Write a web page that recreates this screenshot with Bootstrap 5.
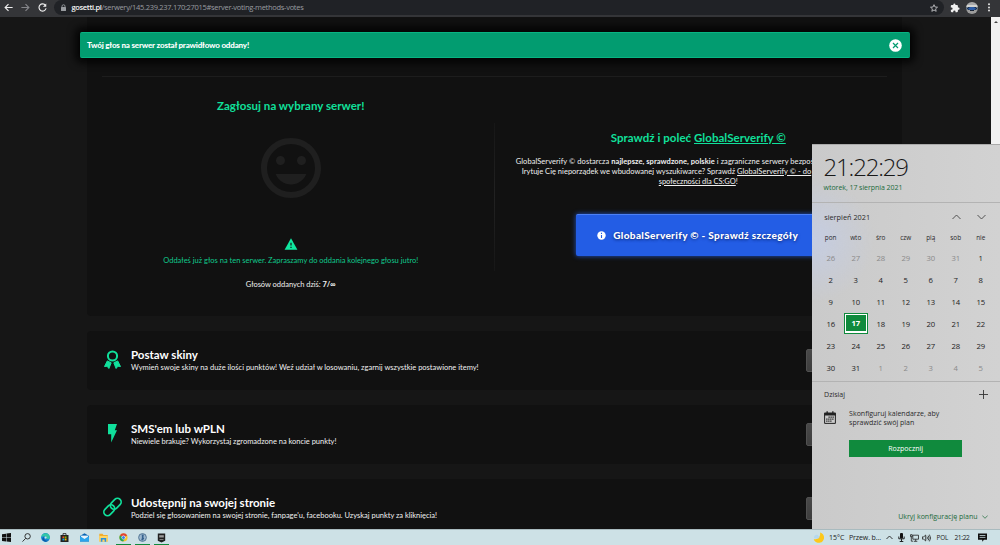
<!DOCTYPE html>
<html lang="pl">
<head>
<meta charset="utf-8">
<meta name="viewport" content="width=device-width, initial-scale=1">
<title>gosetti.pl</title>
<link href="https://cdn.jsdelivr.net/npm/bootstrap@5.3.0/dist/css/bootstrap.min.css" rel="stylesheet">
<style>
:root{--mint:#10e09b;--os:"Open Sans","Noto Sans",sans-serif}
body{width:1000px;height:545px;overflow:hidden;background:#161616;font-family:Lato,"Noto Sans",sans-serif;font-size:7.5px;line-height:10px;color:#f0f0f0}
svg{display:block;flex:none}
.toolbar{height:17px;background:#343538;font-family:var(--os);flex:none}
.nav-icons{width:54px;padding-left:4px;padding-bottom:2px}
.urlbar{width:890px;height:15px;background:#202226;border-radius:8px;margin-bottom:2px;padding-left:6px;padding-right:6px;font-size:7.5px;color:#999ca0}
.urlbar b{font-weight:600;color:#f4f4f4;letter-spacing:-.35px}
.urlbar .path{letter-spacing:-.3px}
.avatar{width:12px;height:12px;border-radius:50%;background:radial-gradient(ellipse 5px 2px at 50% 55%,#2c5da8 0 60%,#18202c 100%,transparent),linear-gradient(#aaa 0 28%,#d3d3d0 28% 45%,#6d7a88 45% 65%,#9c9c9c 65%)}
.site{height:512px;overflow:hidden;flex:none}
.content-col{margin-left:87px;width:815px}
.panel{background:#111}
.notice{left:79.5px;top:15px;width:830px;height:26px;background:#029c70;border:1px solid #08b482;border-width:1px 0;border-radius:2px;box-shadow:0 0 8px 4px #020202;padding:0 7.5px;font-weight:900;font-size:8px;letter-spacing:-.175px;color:#fff}
.vote{height:299px;padding:59px 15px 0;border-radius:0 0 4px 4px}
.rule{height:1px;background:#1d1d1d}
.half{width:407.5px;flex:none}
.ttl{font-size:11.5px;font-weight:700;line-height:16px;letter-spacing:.038px;color:var(--mint)}
.split{width:1px;height:148px;margin-top:46px;margin-left:-1px;background:linear-gradient(#171717,#222,#171717)}
.blurb{width:365px;margin-top:11px;letter-spacing:.06px}
.cta{width:245px;height:42.5px;background:#235de5;border-top:1px solid #4c80f5;border-radius:2px;box-shadow:0 0 5px #2356cc;color:#fff;font-size:10px;font-weight:900;letter-spacing:.345px;text-shadow:0 1px 3px #0a2470;margin-top:27px;padding-right:1px}
.option{height:59px;border-radius:4px;margin-top:15px;padding:0 15px 0 16px}
.option h2{font-size:11.5px;font-weight:700;line-height:14px;margin:0 0 .5px;color:#fff}
.option .ico{width:19px;color:var(--mint)}
.option .go{width:81px;height:23px;background:linear-gradient(#494949,#3e3e3e);border:1px solid #505050;border-radius:2px}
.scrollbar{width:9px;background:#f1f1f1;flex:none;padding-top:4px}
.flyout{right:0;top:144px;width:188.4px;height:385px;z-index:5;background:radial-gradient(circle at 0 95px,#c5cde2 0,rgba(205,206,208,0) 62px),linear-gradient(90deg,#cacaca,#d2d2d2);border:1px solid #aaa;border-width:1px 0 0 0;color:#2a2a2a;font-family:var(--os);font-size:7px}
.clock{height:58px;border-bottom:1px solid #b3b3b3;padding:8px 0 0 12px}
.time{font-size:24px;font-weight:300;line-height:27px;letter-spacing:-1.2px;color:#181818}
.date{color:#1b6a3a;letter-spacing:-.05px;margin-top:2.5px}
.month{height:143.5px;padding-left:6.6px;padding-top:8px}
.mhead{padding:0 5px 0 6px;height:12px}
.days{display:grid;grid-template-columns:repeat(7,25px);text-align:center}
.days.names{font-size:6.4px;line-height:10px;margin-top:9.5px;margin-bottom:4px}
.days.nums{grid-auto-rows:22px;line-height:22.5px;font-size:7.7px;letter-spacing:-.15px;color:#222}
.days .off{color:#8a8a8a}
.today{width:24px;height:21px;margin:0 auto;border:1px solid #108a3d;background:#fff;padding:1.2px}
.today span{display:block;background:#108a3d;color:#fff;font-weight:700;height:100%;line-height:16.5px}
.agenda{border-top:1px solid #b3b3b3;padding:8px 6.5px 0 12.5px;height:148px;margin-top:34px}
.start{width:113px;height:17px;background:#108a3d;color:#fff;margin:12px 0 0 25px;line-height:17px}
.plan{color:#1b6a3a;margin-top:55px}
.taskbar{height:16px;background:#cde1e6;border-top:1px solid #a9bbbf;font-family:var(--os);font-size:7px;color:#222;flex:none}
.app{width:19.4px;height:15px;display:flex;align-items:center;justify-content:center}
.app.open{background:linear-gradient(#108a3d,#108a3d) center bottom/15px 1.5px no-repeat}
.tray{width:188px}
</style>
</head>
<body class="d-flex flex-column position-relative">

<header class="toolbar d-flex align-items-center">
  <div class="nav-icons d-flex align-items-center">
    <svg width="9" height="9" viewBox="0 0 24 24" fill="none" stroke="#eee" stroke-width="3"><path d="M23 12H4M12 3l-9 9 9 9"/></svg>
    <svg class="ms-2" width="9" height="9" viewBox="0 0 24 24" fill="none" stroke="#85868a" stroke-width="3"><path d="M1 12h19M12 3l9 9-9 9"/></svg>
    <svg class="ms-2" width="9" height="9" viewBox="0 0 24 24" fill="none" stroke="#eee" stroke-width="3"><path d="M20 6.5A9.5 9.5 0 1 0 21.500 14"/><path d="M22 1v9h-9z" fill="#eee" stroke="none"/></svg>
  </div>
  <div class="urlbar d-flex align-items-center">
    <svg width="7" height="8" viewBox="0 0 14 16"><path d="M4 7V4.500a3 3 0 0 1 6 0V7" fill="none" stroke="#999ca0" stroke-width="1.800"/><rect x="2" y="6" width="10" height="8" rx="1" fill="#999ca0"/></svg>
    <span style="margin-left:4.500px;margin-top:-1px"><b>gosetti.pl</b><span class="path">/serwery/145.239.237.170:27015#server-voting-methods-votes</span></span>
    <svg class="ms-auto" width="8" height="8" viewBox="0 0 24 24" fill="none" stroke="#cfd0d3" stroke-width="2.400"><path d="M12 2l3 7 7.500.600-5.700 5 1.700 7.400-6.500-4-6.500 4 1.700-7.400-5.700-5L9 9z"/></svg>
  </div>
  <svg style="margin-left:6px;margin-bottom:2px" width="10" height="10" viewBox="0 0 24 24" fill="#f1f1f1"><path d="M20.500 11H19V7a2 2 0 0 0-2-2h-4V3.500a2.500 2.500 0 0 0-5 0V5H4a2 2 0 0 0-2 2v3.800h1.500a2.700 2.700 0 0 1 0 5.400H2V20a2 2 0 0 0 2 2h3.800v-1.500a2.700 2.700 0 0 1 5.400 0V22H17a2 2 0 0 0 2-2v-4h1.500a2.500 2.500 0 0 0 0-5z"/></svg>
  <div class="avatar" style="margin-left:6px;margin-bottom:2px"></div>
  <svg style="margin-left:9px;margin-bottom:2px" width="4" height="9" viewBox="0 0 4 9" fill="#e4e4e4"><circle cx="2" cy="1.200" r="1"/><circle cx="2" cy="4.400" r="1"/><circle cx="2" cy="7.600" r="1"/></svg>
</header>

<div class="site d-flex">
  <main class="flex-grow-1 position-relative">
    <div class="notice position-absolute d-flex align-items-center justify-content-between" role="alert">
      <span>Twój głos na serwer został prawidłowo oddany!</span>
      <svg width="13" height="13" viewBox="0 0 13 13"><circle cx="6.500" cy="6.500" r="6.300" fill="#fff"/><path d="M4 4l5 5M9 4l-5 5" stroke="#029c70" stroke-width="1.200"/></svg>
    </div>
    <div class="content-col">
      <section class="panel vote">
        <div class="rule"></div>
        <div class="d-flex" style="margin:0 -15px">
          <div class="half d-flex flex-column align-items-center">
            <div class="ttl" style="margin-top:20.500px">Zagłosuj na wybrany serwer!</div>
            <svg style="margin-top:18px" width="72" height="72" viewBox="0 0 24 24" fill="#1f1f1f"><path d="M11.990 2C6.470 2 2 6.480 2 12s4.470 10 9.990 10C17.520 22 22 17.520 22 12S17.520 2 11.990 2zM12 20a8 8 0 1 1 0-16 8 8 0 0 1 0 16zM15.500 11a1.500 1.500 0 1 0 0-3 1.500 1.500 0 0 0 0 3zM8.500 11a1.500 1.500 0 1 0 0-3 1.500 1.500 0 0 0 0 3zM12 17.500c2.330 0 4.310-1.460 5.110-3.500H6.890c.8 2.040 2.780 3.500 5.110 3.500z"/></svg>
            <svg style="margin-top:33.500px" width="14" height="14" viewBox="0 0 24 24"><path d="M1 22h22L12 2z" fill="#10e8a0"/><path d="M11 10h2v4.500h-2zM11 16.500h2v2.200h-2z" fill="#111"/></svg>
            <div style="margin-top:4.500px;color:#10c98c">Oddałeś już głos na ten serwer. Zapraszamy do oddania kolejnego głosu jutro!</div>
            <div style="margin-top:14.500px;letter-spacing:-.03px">Głosów oddanych dziś: <b>7/∞</b></div>
          </div>
          <div class="split"></div>
          <div class="half d-flex flex-column align-items-center text-nowrap">
            <div class="ttl" style="margin-top:52.500px">Sprawdź i poleć <u>GlobalServerify ©</u></div>
            <div class="blurb">
              <div>GlobalServerify © dostarcza <b>najlepsze, sprawdzone, polskie</b> i zagraniczne serwery bezpoś</div>
              <div style="padding-left:6px;letter-spacing:.02px">Irytuje Cię nieporządek we wbudowanej wyszukiwarce? Sprawdź <u>GlobalServerify © - do</u></div>
              <div class="text-center" style="letter-spacing:-.044px"><u>społeczności dla CS:GO</u>!</div>
            </div>
            <div class="cta d-flex align-items-center justify-content-center">
              <svg width="9" height="9" viewBox="0 0 9 9"><circle cx="4.500" cy="4.500" r="4.200" fill="#fff"/><path d="M4.500 1.800v1.200M4.500 3.900v3" stroke="#235de5" stroke-width="1.100"/></svg>
              <span style="margin-left:7px">GlobalServerify © - Sprawdź szczegóły</span>
            </div>
          </div>
        </div>
      </section>

      <section class="panel option d-flex align-items-center">
        <svg class="ico" height="20" viewBox="0 0 19 20" fill="none" stroke="currentColor" style="margin-top:-2px"><circle cx="9.500" cy="6" r="4.600" stroke-width="2"/><path d="M4.300 10.900l3.900 1.900L5.900 18.500 4.100 16.200 1.500 16.500zM14.700 10.900l-3.900 1.900 2.300 5.700 1.800-2.300 2.600.300z" fill="currentColor"/></svg>
        <div style="margin-left:9px"><h2>Postaw skiny</h2>Wymień swoje skiny na duże ilości punktów! Weź udział w losowaniu, zgarnij wszystkie postawione itemy!</div>
        <div class="go ms-auto"></div>
      </section>
      <section class="panel option d-flex align-items-center">
        <svg class="ico" height="20" viewBox="0 0 19 20" fill="currentColor" style="margin-top:-3px"><path d="M5 1h9l-2.200 6.300H14L8.200 19.500V11.200H5z"/></svg>
        <div style="margin-left:9px"><h2>SMS'em lub wPLN</h2><span style="letter-spacing:-.02px">Niewiele brakuje? Wykorzystaj zgromadzone na koncie punkty!</span></div>
        <div class="go ms-auto"></div>
      </section>
      <section class="panel option d-flex align-items-center">
        <svg class="ico" height="20" viewBox="0 0 19 20" fill="none" stroke="currentColor" stroke-width="1.700" style="margin-top:-4px"><g transform="rotate(-45 9.500 10)"><rect x="-1.200" y="6.300" width="12.200" height="7.400" rx="3.700"/><rect x="8" y="6.300" width="12.200" height="7.400" rx="3.700"/></g></svg>
        <div style="margin-left:9px"><h2 style="letter-spacing:-.03px">Udostępnij na swojej stronie</h2><span style="letter-spacing:-.018px">Podziel się głosowaniem na swojej stronie, fanpage'u, facebooku. Uzyskaj punkty za kliknięcia!</span></div>
        <div class="go ms-auto"></div>
      </section>
    </div>
  </main>
  <div class="scrollbar"><svg class="mx-auto" width="4" height="3" viewBox="0 0 4 3"><path d="M0 2l2-2 2 2z" fill="#444"/></svg></div>
</div>

<aside class="flyout position-absolute">
  <div class="clock">
    <div class="time">21:22:29</div>
    <div class="date">wtorek, 17 sierpnia 2021</div>
  </div>
  <div class="month">
    <div class="mhead d-flex align-items-center">
      <span style="font-size:7.300px">sierpień 2021</span>
      <svg class="ms-auto" width="9" height="6" viewBox="0 0 9 6" fill="none" stroke="#444" stroke-width=".9"><path d="M.5 5l4-4 4 4"/></svg>
      <svg style="margin:0 9px 0 16px" width="9" height="6" viewBox="0 0 9 6" fill="none" stroke="#444" stroke-width=".9"><path d="M.5 1l4 4 4-4"/></svg>
    </div>
    <div class="days names"><span>pon</span><span>wto</span><span>śro</span><span>czw</span><span>pią</span><span>sob</span><span>nie</span></div>
    <div class="days nums">
      <span class="off">26</span><span class="off">27</span><span class="off">28</span><span class="off">29</span><span class="off">30</span><span class="off">31</span><span>1</span>
      <span>2</span><span>3</span><span>4</span><span>5</span><span>6</span><span>7</span><span>8</span>
      <span>9</span><span>10</span><span>11</span><span>12</span><span>13</span><span>14</span><span>15</span>
      <span>16</span><div class="today"><span>17</span></div><span>18</span><span>19</span><span>20</span><span>21</span><span>22</span>
      <span>23</span><span>24</span><span>25</span><span>26</span><span>27</span><span>28</span><span>29</span>
      <span>30</span><span>31</span><span class="off">1</span><span class="off">2</span><span class="off">3</span><span class="off">4</span><span class="off">5</span>
    </div>
  </div>
  <div class="agenda">
    <div class="d-flex align-items-center justify-content-between" style="padding-right:6px"><span>Dzisiaj</span>
      <svg width="9" height="9" viewBox="0 0 9 9" stroke="#333" stroke-width=".9"><path d="M4.500 0v9M0 4.500h9"/></svg></div>
    <div class="d-flex" style="margin-top:9px;line-height:9.500px">
      <svg style="margin-top:2px" width="12" height="13" viewBox="0 0 12 13"><path d="M.6 2.200h10.800v10.200H.6z" fill="none" stroke="#222"/><path d="M.3 1.800h11.400v2.700H.3zM2.500.300h1.300v2H2.500zM8.200.300h1.300v2H8.200z" fill="#222"/><path d="M4.500 6.200h5.500M2.200 8.200H10M2.200 10.200h5.500" stroke="#222" stroke-width="1.200" stroke-dasharray="1.300 .7"/></svg>
      <span style="margin-left:13px">Skonfiguruj kalendarze, aby<br>sprawdzić swój plan</span>
    </div>
    <div class="start text-center">Rozpocznij</div>
    <div class="plan d-flex align-items-center justify-content-end" style="padding-right:6px">Ukryj konfigurację planu
      <svg style="margin-left:4px" width="6" height="4" viewBox="0 0 6 4" fill="none" stroke="#1b6a3a" stroke-width=".7"><path d="M.3.500L3 3.300 5.700.500"/></svg></div>
  </div>
</aside>

<footer class="taskbar d-flex justify-content-between">
  <div class="d-flex" style="margin-left:-3px">
    <div class="app"><svg width="9" height="9" viewBox="0 0 9 9" fill="#111"><path d="M0 1.200L4 .700v3.600H0zM4.500.600L9 0v4.300H4.500zM0 4.800h4v3.600L0 7.900zM4.500 4.800H9V9L4.500 8.400z"/></svg></div>
    <div class="app"><svg width="9" height="9" viewBox="0 0 9 9" fill="none" stroke="#222" stroke-width=".9"><circle cx="5.600" cy="3.300" r="2.700"/><path d="M3.700 5.300L.5 8.600"/></svg></div>
    <div class="app"><svg width="9" height="9" viewBox="0 0 9 9"><circle cx="4.500" cy="4.500" r="4.400" fill="#1588d8"/><path d="M.2 4C1-.8 8.400-1 8.900 4.200 8.800 6.600 6 6.300 5.400 5.600c.8-2-2.600-3.500-5.200-1.600z" fill="#35c7a5"/><path d="M3 4c-1 2 1 4.300 4.800 3.600-2 2-6 1.200-6.500-1.600C1.200 5 2 4.200 3 4z" fill="#0c59a4"/><circle cx="4.600" cy="4.600" r="1.100" fill="#cde1e6"/></svg></div>
    <div class="app"><svg width="9" height="9" viewBox="0 0 9 9"><path d="M3 2.200V.600h3v1.600" fill="none" stroke="#222" stroke-width=".8"/><path d="M.5 2h8v7h-8z" fill="#222"/><path d="M2.500 3.400h1.800v1.800H2.500z" fill="#f25022"/><path d="M4.700 3.400h1.800v1.800H4.700z" fill="#7fba00"/><path d="M2.500 5.600h1.800v1.800H2.500z" fill="#00a4ef"/><path d="M4.700 5.600h1.800v1.800H4.700z" fill="#ffb900"/></svg></div>
    <div class="app"><svg width="9" height="9" viewBox="0 0 9 9"><path d="M0 3l4.500-2.700L9 3v5.500H0z" fill="#0864b4"/><path d="M1 2.600h7V6H1z" fill="#e8f4fb"/><path d="M0 3l4.500 3L9 3v5.500H0z" fill="#2aa4ec"/></svg></div>
    <div class="app"><svg width="9" height="9" viewBox="0 0 9 9"><path d="M.3.800h3.200l1 1.200h4.200v6.500H.3z" fill="#f2ad2c"/><path d="M.3 3h8.400v5.500H.3z" fill="#ffd766"/><path d="M1.800 8.700V5h5.400v3.700H5.600V6.500H3.400v2.200z" fill="#2d90dc"/></svg></div>
    <div class="app open"><svg width="9" height="9" viewBox="0 0 9 9"><circle cx="4.500" cy="4.500" r="4.100" fill="#f6c62d"/><path d="M4.500 4.500L.9 2.400A4.200 4.200 0 0 1 8.200 2.400z" fill="#df4435"/><path d="M.9 2.400A4.200 4.200 0 0 0 4.200 8.600L6 5.300z" fill="#26a45a"/><circle cx="4.500" cy="4.500" r="2" fill="#fff"/><circle cx="4.500" cy="4.500" r="1.500" fill="#3d7ee8"/></svg></div>
    <div class="app open"><svg width="9" height="9" viewBox="0 0 9 9"><circle cx="4.500" cy="4.500" r="3.900" fill="#9cb8cf" stroke="#4d7190" stroke-width=".9"/><path d="M3.800 1.500l2 .3-.4 2.400.8 1.300-1.500 2-1.500-.6.700-2z" fill="#35618d"/></svg></div>
    <div class="app open"><svg width="9" height="10" viewBox="0 0 9 10"><path d="M.8.500h7.400v7.200L4.500 9.500.8 7.700z" fill="#202020"/><path d="M2.200 2.200h4.600v2.300H2.200z" fill="#9a9a9a"/><path d="M2.500 6.500h4" stroke="#bbb" stroke-width=".6"/></svg></div>
  </div>
  <div class="tray d-flex align-items-center">
    <svg style="margin-left:1px" width="11" height="11" viewBox="0 0 11 11"><path d="M7 .400A5.300 5.300 0 1 1 .7 7.200 5.500 5.500 0 0 0 7 .400z" fill="#fdc81a"/><path d="M1 5.500c0-3 4-3.500 4.500-1.200 1.500.2 1 2.200-.5 2.200H2A1 1 0 0 1 1 5.500z" fill="#b4d8ef"/></svg>
    <span style="margin-left:5px">15°C</span>
    <span class="text-nowrap" style="margin-left:4.500px;width:33px;letter-spacing:-.1px">Przew. b...</span>
    <svg style="margin-left:4px" width="7" height="5" viewBox="0 0 7 5" fill="none" stroke="#222" stroke-width=".9"><path d="M.5 4l3-3 3 3"/></svg>
    <svg style="margin-left:5px" width="7" height="9" viewBox="0 0 7 9"><rect x="2" y="0" width="3" height="5.500" rx="1" fill="#111"/><path d="M.8 3.500v2.300h5.400V3.500M3.500 6v2.500M1.700 8.500h3.600" fill="none" stroke="#111" stroke-width=".9"/></svg>
    <svg style="margin-left:5px" width="9" height="8" viewBox="0 0 9 8" fill="none" stroke="#222" stroke-width=".8"><path d="M2.800 1.200h5.700v4H2.800zM4 7.300h3.300M5.700 5.200v2M.5.700h1.700v2H.5zM1.300 2.700v4.500h2"/></svg>
    <svg style="margin-left:3.500px" width="9" height="8" viewBox="0 0 9 8" fill="none" stroke="#222" stroke-width=".8"><path d="M.5 2.800h1.300L3.700 1v6L1.800 5.200H.5zM5 2.700q.9 1.300 0 2.600M6.200 1.600q1.700 2.400 0 4.800M7.400.600q2.400 3.400 0 6.800"/></svg>
    <span style="margin-left:5px;width:12px;font-size:6.300px">POL</span>
    <span style="margin-left:6px;font-size:6.700px;letter-spacing:-.4px">21:22</span>
    <svg style="margin-left:9px" width="9" height="9" viewBox="0 0 9 9"><path d="M0 .500h9v6.300H6L4.200 8.800V6.800H0z" fill="#111"/><path d="M1.600 2.500h5.800M1.600 4.400h5.800" stroke="#cde1e6" stroke-width=".8"/></svg>
  </div>
</footer>

<script src="https://cdn.jsdelivr.net/npm/bootstrap@5.3.0/dist/js/bootstrap.bundle.min.js"></script>
</body>
</html>
